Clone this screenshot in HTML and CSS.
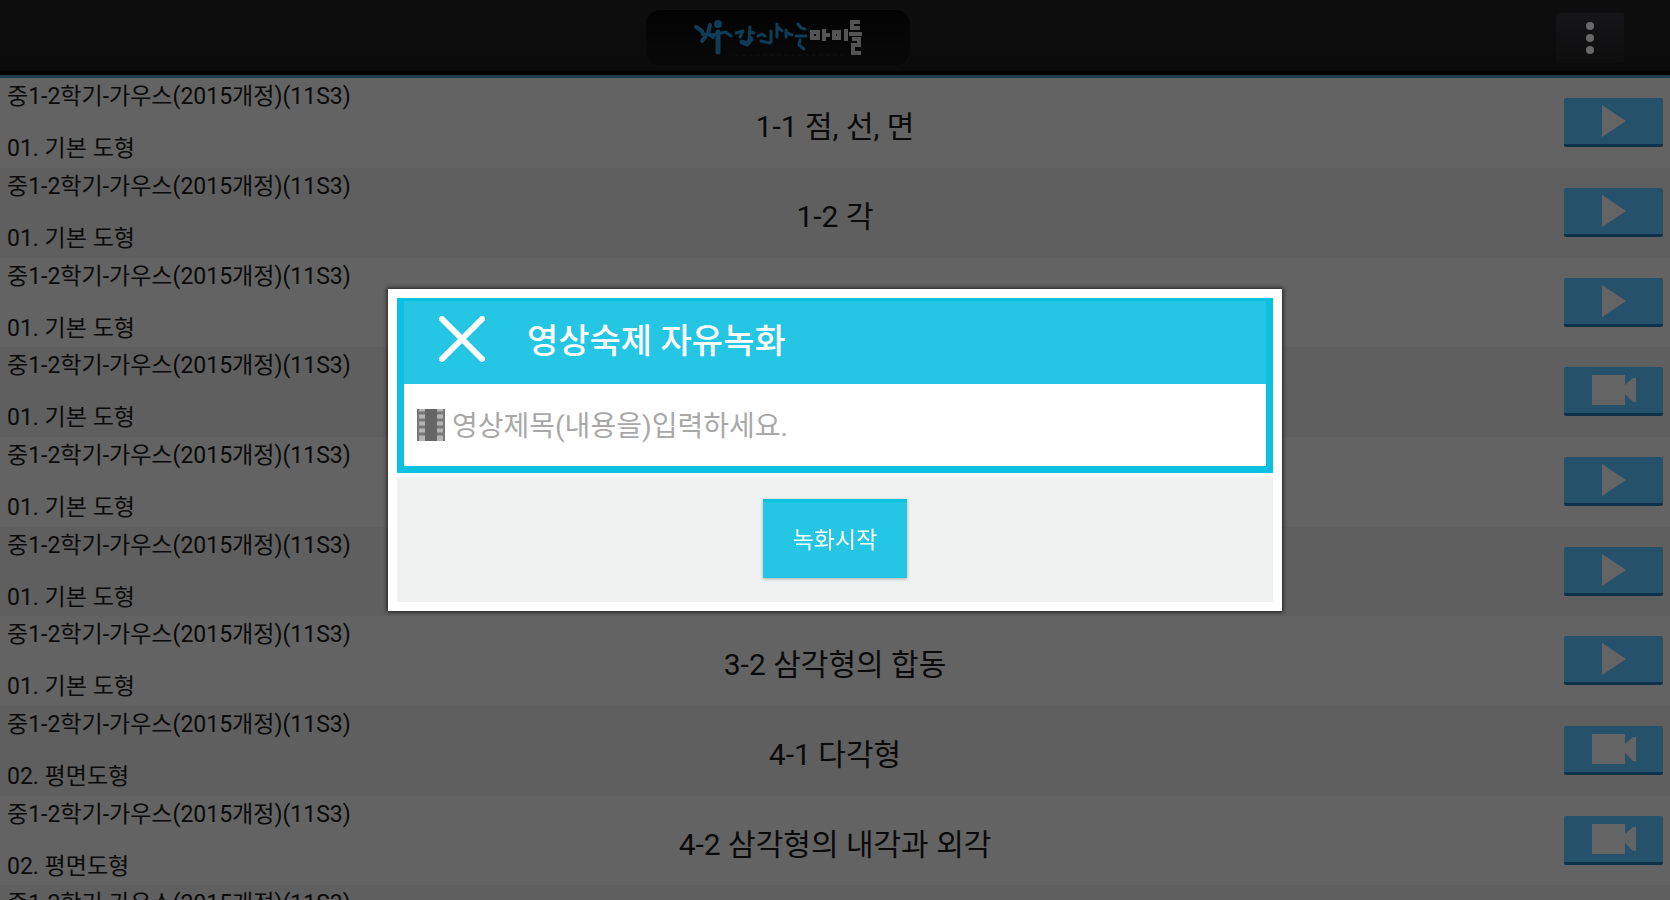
FILE: index.html
```html
<!DOCTYPE html>
<html lang="ko">
<head>
    <meta charset="UTF-8">
    <meta name="viewport" content="width=device-width, initial-scale=1.0">
    <title>영상숙제 자유녹화</title>
    <link rel="stylesheet" href="styles.css">
</head>
<body>
    <!-- icons used by the list buttons -->
    <svg width="0" height="0" class="sprite">
        <symbol id="icon-play" viewBox="0 0 24 32"><path d="M0 0L24 16L0 32Z"/></symbol>
        <symbol id="icon-camera" viewBox="0 0 44 30"><path d="M0 0H33V10L41 3H44V27H41L33 19V30H0Z"/></symbol>
    </svg>

    <header class="topbar">
        <div class="logo">
            <svg viewBox="0 0 170 44" width="170" height="44">
                <g fill="none" stroke="#1e78ac" stroke-width="3" stroke-linecap="round" stroke-linejoin="round">
                    <path d="M3 11L9 15L10 18M17 9L15 17L9 25M15 17L20 21" stroke-width="4"/>
                    <path d="M19 19L33 16" />
                    <path d="M25 16V36" stroke-width="5"/>
                    <path d="M34 17L38 20"/>
                    <path d="M43 17L50 15L47 21M57 11L56 22M57 16L61 17"/>
                    <path d="M49 26L54 28L58 23" stroke-width="5"/>
                    <path d="M65 20L69 18L72 20M68 25L77 27M78 15V26"/>
                    <path d="M84 8V21M85 11L89 15M93 14V21M94 17L99 19"/>
                    <path d="M105 8L108 12L112 13M103 20H113M107 24L106 29L111 33"/>
                </g>
                <circle cx="25" cy="8" r="4" fill="#1e78ac"/>
                <g fill="none" stroke="#a8a8a8" stroke-width="4">
                    <path d="M119 16H125V22H119Z M131 13V25M133 19H137M141 16H146V22H141Z M153 13V25"/>
                    <path d="M167 6H159V12H167M156 18H169M159 23H166V29H160V37H168"/>
                </g>
                <path d="M42 39H152" stroke="#222" stroke-dasharray="4 3"/>
            </svg>
        </div>
        <button class="menu" type="button" aria-label="메뉴">
            <svg viewBox="0 0 10 34" width="10" height="34">
                <circle cx="5" cy="5" r="4"/>
                <circle cx="5" cy="17" r="4"/>
                <circle cx="5" cy="29" r="4"/>
            </svg>
        </button>
    </header>

    <ul class="lessons" id="lessons"></ul>

    <div class="backdrop">
        <form class="dialog" role="dialog" aria-labelledby="dialog-title">
            <div class="dialog-box">
                <div class="dialog-header">
                    <button class="close" type="button" aria-label="닫기">
                        <svg viewBox="0 0 46 46" width="46" height="46"><path d="M3 3L43 43M43 3L3 43"/></svg>
                    </button>
                    <h2 id="dialog-title">영상숙제 자유녹화</h2>
                </div>
                <div class="field">
                    <label for="video-title" aria-label="영상제목">
                        <svg viewBox="0 0 28 32" width="28" height="32">
                            <path d="M0 0H28V32H0Z" fill="#b4b4b4"/>
                            <path d="M1 0V32M27 0V32" stroke="#777" stroke-width="2"/>
                            <path d="M8 0H20V32H8Z" fill="#666"/>
                            <path d="M2 4H8M2 11H8M2 18H8M2 25H8M20 4H26M20 11H26M20 18H26M20 25H26" stroke="#777" stroke-width="3"/>
                        </svg>
                    </label>
                    <input type="text" id="video-title" placeholder="영상제목(내용을)입력하세요." autocomplete="off">
                </div>
            </div>
            <div class="actions">
                <button class="record" type="submit">녹화시작</button>
            </div>
        </form>
    </div>

    <script src="lessons.js"></script>
</body>
</html>
```
FILE: styles.css
```css
* {
    box-sizing: border-box;
}
body {
    margin: 0;
    height: 100vh;
    display: flex;
    flex-direction: column;
    overflow: hidden;
    background: #c6c6c6;
    color: #141414;
    font-family: Roboto, "Noto Sans CJK KR", sans-serif;
}
button, input {
    font-family: inherit;
}
button {
    padding: 0;
    border: none;
    cursor: pointer;
}
.sprite {
    position: absolute;
}

/* top bar */
.topbar {
    flex: none;
    display: flex;
    align-items: center;
    height: 78px;
    padding-right: 46px;
    background: linear-gradient(#1c1c1c, #161616 70px, #000 73px);
    border-bottom: 3px solid #3c7c9c;
}
.logo {
    display: flex;
    justify-content: center;
    width: 264px;
    height: 56px;
    margin: 0 auto;
    padding-top: 6px;
    border-radius: 14px;
    background: linear-gradient(#060606, #121212);
    box-shadow: 0 0 2px #2c2c2c;
}
.menu {
    display: flex;
    align-items: center;
    justify-content: center;
    width: 68px;
    height: 50px;
    border-radius: 3px;
    background: linear-gradient(#2c2c30, #1c1c1e);
    fill: #d0d0d0;
}

/* lesson list */
.lessons {
    flex: 1;
    min-height: 0;
    margin: 0;
    padding: 0;
    list-style: none;
    overflow: hidden;
}
.lesson {
    display: grid;
    grid-template-columns: 1fr auto 1fr;
    height: 90px;
    padding: 0 7px;
}
.lesson:nth-child(3n) {
    height: 89px;
}
.lesson:nth-child(even) {
    background: #bfbfbf;
}
.course {
    display: flex;
    flex-direction: column;
    gap: 18px;
    padding-top: 2px;
    font-size: 23px;
    line-height: 34px;
    white-space: nowrap;
}
.lesson-title {
    padding-top: 28px;
    font-size: 30px;
    line-height: 42px;
}
.open {
    justify-self: end;
    display: flex;
    align-items: center;
    justify-content: center;
    width: 99px;
    height: 49px;
    margin-top: 20px;
    border-bottom: 3px solid #1f6496;
    border-radius: 2px;
    background: #4aa2d6;
    fill: #c8c8c8;
}

/* record dialog */
.backdrop {
    position: fixed;
    inset: 0;
    display: flex;
    align-items: center;
    justify-content: center;
    background: rgba(0, 0, 0, 0.5);
}
.dialog {
    width: 894px;
    max-width: 100%;
    padding: 9px;
    background: #fff;
    box-shadow: 0 0 4px 1px rgba(0, 0, 0, 0.7);
}
.dialog-box {
    border: 7px solid #0bc1e0;
    border-top-width: 3px;
    background: #fff;
}
.dialog-header {
    display: flex;
    align-items: center;
    gap: 42px;
    height: 83px;
    padding: 0 35px 8px;
    background: #25c5e4;
}
.close {
    display: flex;
    background: none;
    stroke: #fff;
    stroke-width: 6;
    stroke-linecap: round;
}
.dialog-header h2 {
    margin: 0;
    padding-top: 4px;
    color: #fff;
    font-size: 34px;
    font-weight: 500;
    line-height: 48px;
}
.field {
    display: flex;
    align-items: center;
    gap: 7px;
    height: 82px;
    padding: 0 13px;
}
.field label {
    display: flex;
}
.field input {
    flex: 1;
    min-width: 0;
    padding: 4px 0 0;
    border: none;
    outline: none;
    background: none;
    color: #333;
    font-size: 28px;
    line-height: 40px;
}
.field input::placeholder {
    color: #a8a8a8;
    opacity: 1;
}
.actions {
    display: flex;
    justify-content: center;
    margin-top: 4px;
    padding: 22px 0 24px;
    background: #f0f2f1;
}
.record {
    width: 144px;
    height: 79px;
    padding-bottom: 4px;
    border-top: 3px solid #0bc1e0;
    background: #25c5e4;
    box-shadow: 0 1px 3px rgba(0, 0, 0, 0.3);
    color: #fff;
    font-size: 23px;
}
```
FILE: lessons.js
```js
const COURSE = '중1-2학기-가우스(2015개정)(11S3)';

const lessons = [
    { chapter: '01. 기본 도형', title: '1-1 점, 선, 면', icon: 'play' },
    { chapter: '01. 기본 도형', title: '1-2 각', icon: 'play' },
    { chapter: '01. 기본 도형', title: '', icon: 'play' },
    { chapter: '01. 기본 도형', title: '', icon: 'camera' },
    { chapter: '01. 기본 도형', title: '', icon: 'play' },
    { chapter: '01. 기본 도형', title: '', icon: 'play' },
    { chapter: '01. 기본 도형', title: '3-2 삼각형의 합동', icon: 'play' },
    { chapter: '02. 평면도형', title: '4-1 다각형', icon: 'camera' },
    { chapter: '02. 평면도형', title: '4-2 삼각형의 내각과 외각', icon: 'camera' },
    { chapter: '', title: '', icon: '' }
];

const sizes = { play: [24, 32], camera: [44, 30] };

function openButton(icon) {
    if (!icon) return '';
    const [w, h] = sizes[icon];
    const label = icon === 'play' ? '재생' : '녹화';
    return `
        <button class="open" type="button" aria-label="${label}">
            <svg width="${w}" height="${h}"><use href="#icon-${icon}"/></svg>
        </button>
    `;
}

document.getElementById('lessons').innerHTML = lessons.map(lesson => `
    <li class="lesson">
        <div class="course">
            <span>${COURSE}</span>
            <span>${lesson.chapter}</span>
        </div>
        <div class="lesson-title">${lesson.title}</div>
        ${openButton(lesson.icon)}
    </li>
`).join('');
```
